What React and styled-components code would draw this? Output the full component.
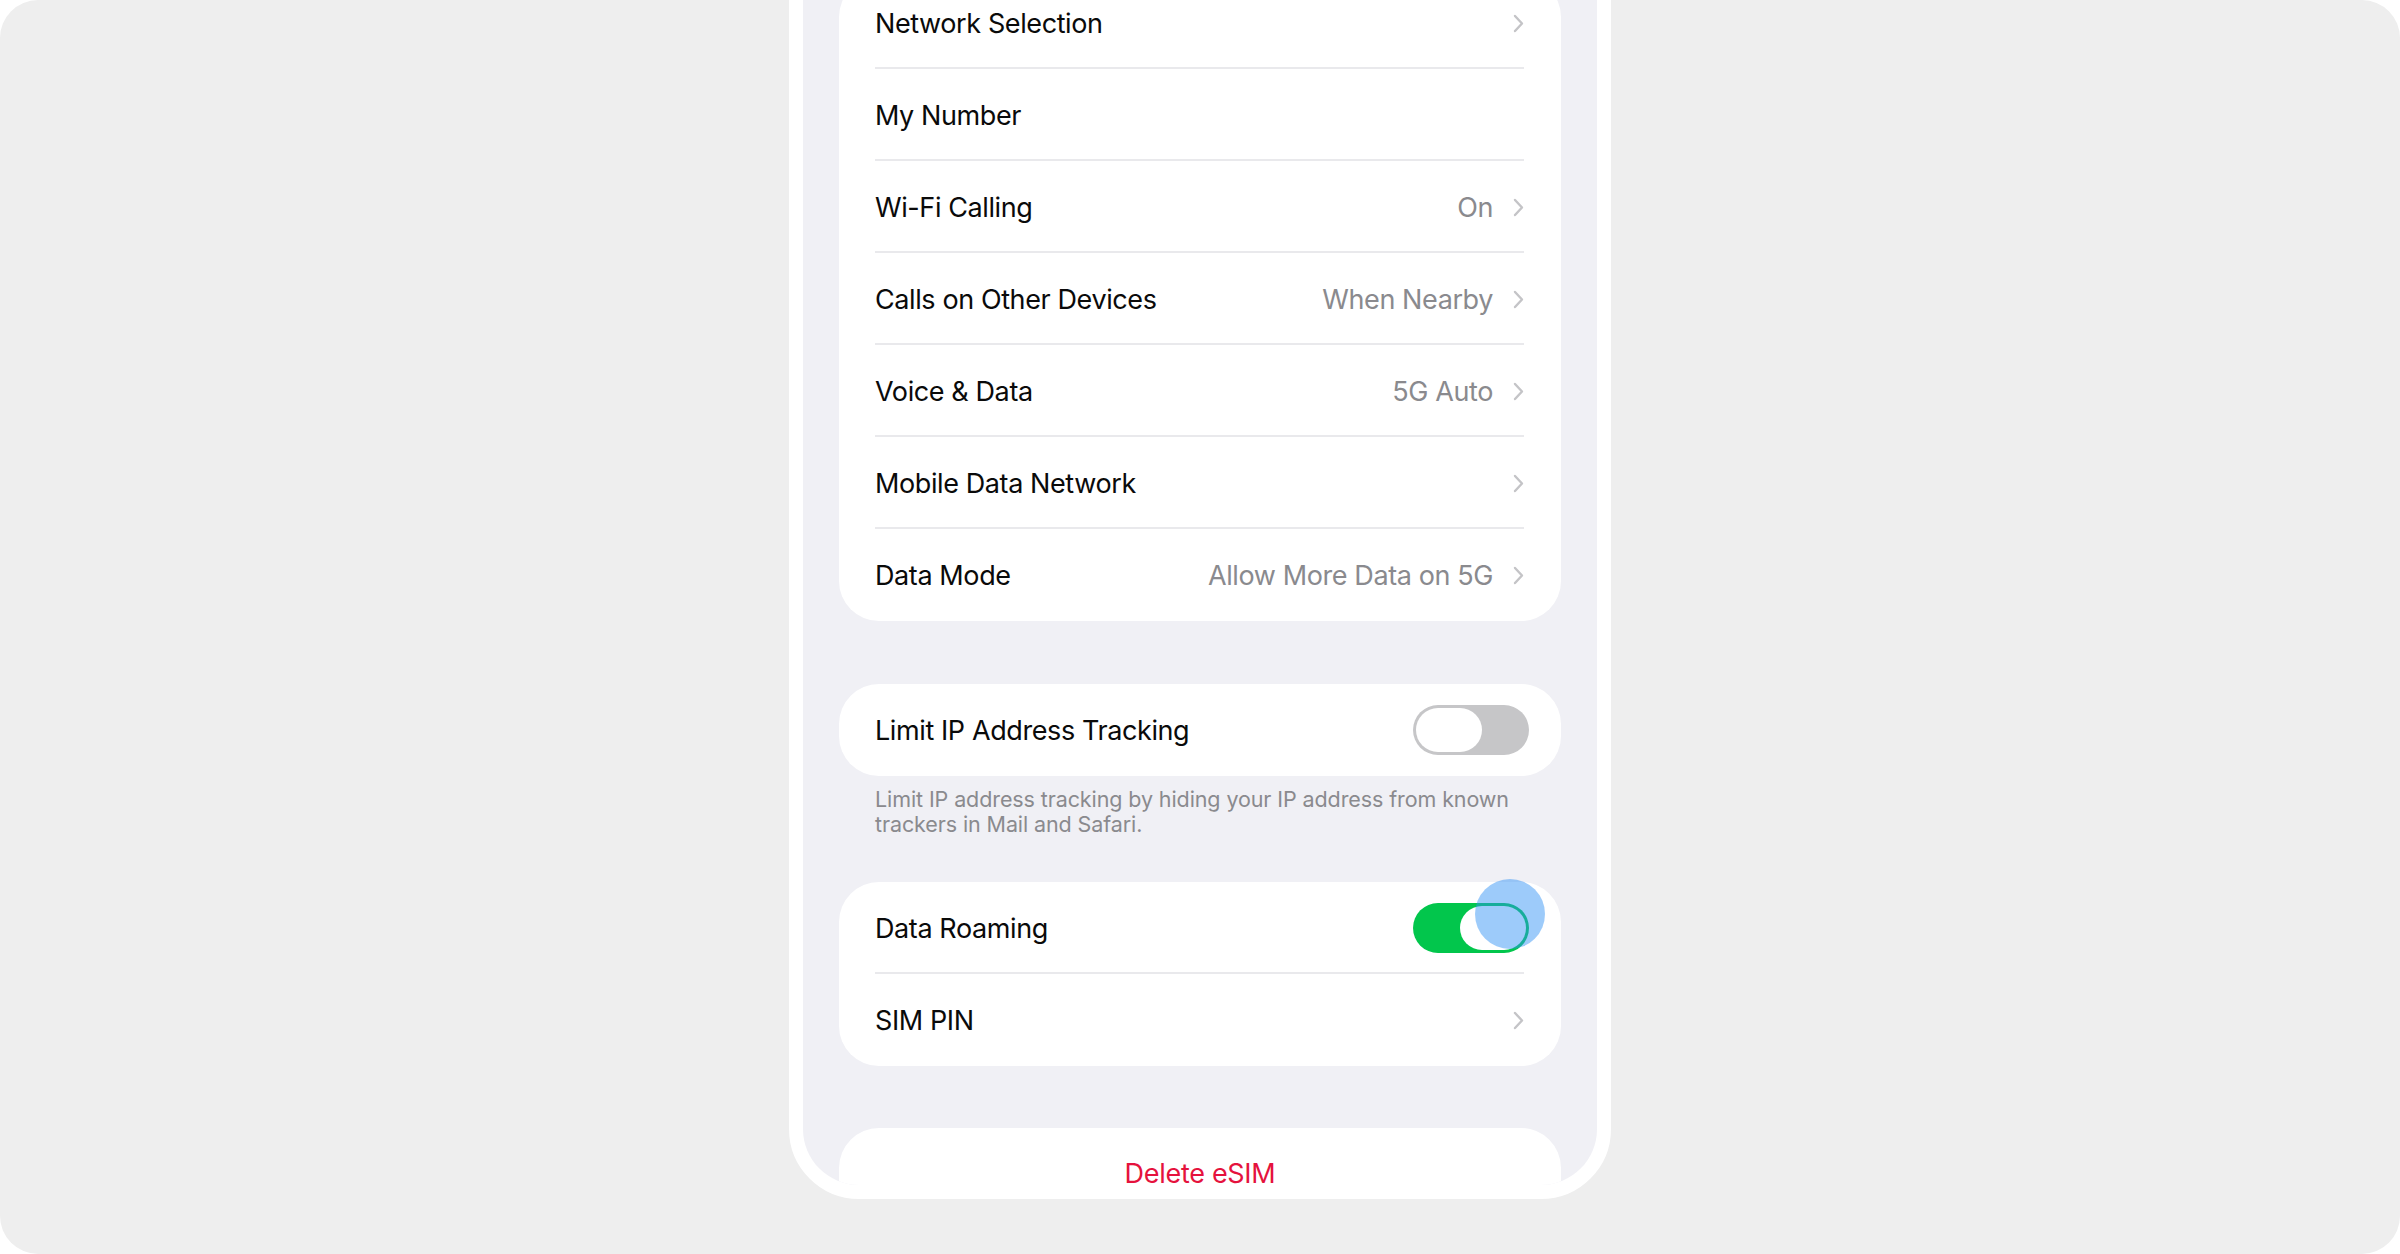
import React from "react";
import styled, { createGlobalStyle, css } from "styled-components";

const GlobalStyle = createGlobalStyle`
  html, body {
    margin: 0;
    padding: 0;
    background: #ffffff;
  }
  body {
    font-family: Inter, "Noto Sans", "Liberation Sans", sans-serif;
    -webkit-font-smoothing: antialiased;
  }
`;

const carrierRows = [
  { id: 1, label: "Network Selection", chevron: true },
  { id: 2, label: "My Number" },
  { id: 3, label: "Wi-Fi Calling", value: "On", chevron: true },
  { id: 4, label: "Calls on Other Devices", value: "When Nearby", chevron: true },
  { id: 5, label: "Voice & Data", value: "5G Auto", chevron: true },
  { id: 6, label: "Mobile Data Network", chevron: true },
  { id: 7, label: "Data Mode", value: "Allow More Data on 5G", chevron: true },
];

const Chevron = () => (
  <ChevronIcon width="11" height="19" viewBox="0 0 11 19">
    <path
      d="M2 2 L9 9.5 L2 17"
      fill="none"
      stroke="#c4c4c7"
      strokeWidth="2.4"
      strokeLinecap="round"
      strokeLinejoin="round"
    />
  </ChevronIcon>
);

const Switch = ({ on, pressed }) => (
  <Track $on={on}>
    <Knob $on={on} />
    {pressed && <TouchDot />}
  </Track>
);

const SettingRow = ({ label, value, chevron, last, children }) => (
  <Row>
    <RowBody $last={last}>
      <Label>{label}</Label>
      <Trailing>
        {value && <Value>{value}</Value>}
        {chevron && <Chevron />}
        {children}
      </Trailing>
    </RowBody>
  </Row>
);

const App = () => {
  return (
    <>
      <GlobalStyle />
      <Frame>
        <Phone>
          <Screen>
            <Card $gap={63}>
              {carrierRows.map((row, i) => (
                <SettingRow
                  key={row.id}
                  label={row.label}
                  value={row.value}
                  chevron={row.chevron}
                  last={i === carrierRows.length - 1}
                />
              ))}
            </Card>

            <Card>
              <SettingRow label="Limit IP Address Tracking" last>
                <Switch on={false} />
              </SettingRow>
            </Card>
            <Footer>
              Limit IP address tracking by hiding your IP address from known
              trackers in Mail and Safari.
            </Footer>

            <Card $gap={62}>
              <SettingRow label="Data Roaming">
                <Switch on pressed />
              </SettingRow>
              <SettingRow label="SIM PIN" chevron last />
            </Card>

            <Card>
              <DangerRow>Delete eSIM</DangerRow>
            </Card>
          </Screen>
        </Phone>
      </Frame>
    </>
  );
};

export default App;

const Frame = styled.div`
  width: 2400px;
  height: 1254px;
  background: #eeeeee;
  border-radius: 38px;
  overflow: hidden;
  display: flex;
  justify-content: center;
  align-items: flex-start;
`;

const Phone = styled.div`
  box-sizing: border-box;
  flex-shrink: 0;
  width: 822px;
  height: 1436px;
  margin-top: -237px;
  border: 14px solid #ffffff;
  border-radius: 70px;
  background: #ffffff;
`;

const Screen = styled.div`
  box-sizing: border-box;
  height: 100%;
  padding: 200px 36px 0 36px;
  background: #f0f0f5;
  border-radius: 56px;
  overflow: hidden;
  display: flex;
  flex-direction: column;
`;

const Card = styled.section`
  flex-shrink: 0;
  background: #ffffff;
  border-radius: 40px;
  margin-bottom: ${(props) => (props.$gap ? `${props.$gap}px` : "0")};
`;

const Row = styled.div`
  height: 92px;
  padding-left: 36px;
  display: flex;
`;

const RowBody = styled.div`
  flex: 1;
  margin-right: 37px;
  padding-top: 2px;
  display: flex;
  align-items: center;
  justify-content: space-between;
  border-bottom: 2px solid #e9e9ec;
  ${(props) =>
    props.$last &&
    css`
      border-bottom-color: transparent;
    `}
`;

const Label = styled.span`
  font-size: 27px;
  color: #0a0a0a;
  letter-spacing: -0.4px;
`;

const Trailing = styled.div`
  display: flex;
  align-items: center;
  gap: 20px;
`;

const Value = styled.span`
  font-size: 27px;
  color: #8a8a8e;
  letter-spacing: -0.4px;
`;

const ChevronIcon = styled.svg`
  display: block;
  width: 11px;
  height: 19px;
`;

const Track = styled.span`
  position: relative;
  box-sizing: border-box;
  width: 116px;
  height: 50px;
  margin-right: -5px;
  padding: 3px;
  border-radius: 25px;
  display: flex;
  justify-content: ${(props) => (props.$on ? "flex-end" : "flex-start")};
  background: ${(props) => (props.$on ? "#02c64c" : "#c6c6c8")};
`;

const Knob = styled.span`
  width: 66px;
  height: 44px;
  border-radius: 22px;
  background: #ffffff;
`;

const TouchDot = styled.span`
  position: absolute;
  left: 62px;
  top: -24px;
  width: 70px;
  height: 70px;
  border-radius: 50%;
  background: rgba(47, 145, 245, 0.47);
`;

const Footer = styled.p`
  margin: 0 0 46px 0;
  padding: 11px 36px 0 36px;
  font-size: 21.5px;
  line-height: 24.5px;
  letter-spacing: -0.1px;
  color: #8a8a8e;
`;

const DangerRow = styled.div`
  height: 92px;
  box-sizing: border-box;
  padding-top: 35px;
  line-height: 22px;
  text-align: center;
  font-size: 27px;
  letter-spacing: -0.3px;
  color: #e5123d;
`;
